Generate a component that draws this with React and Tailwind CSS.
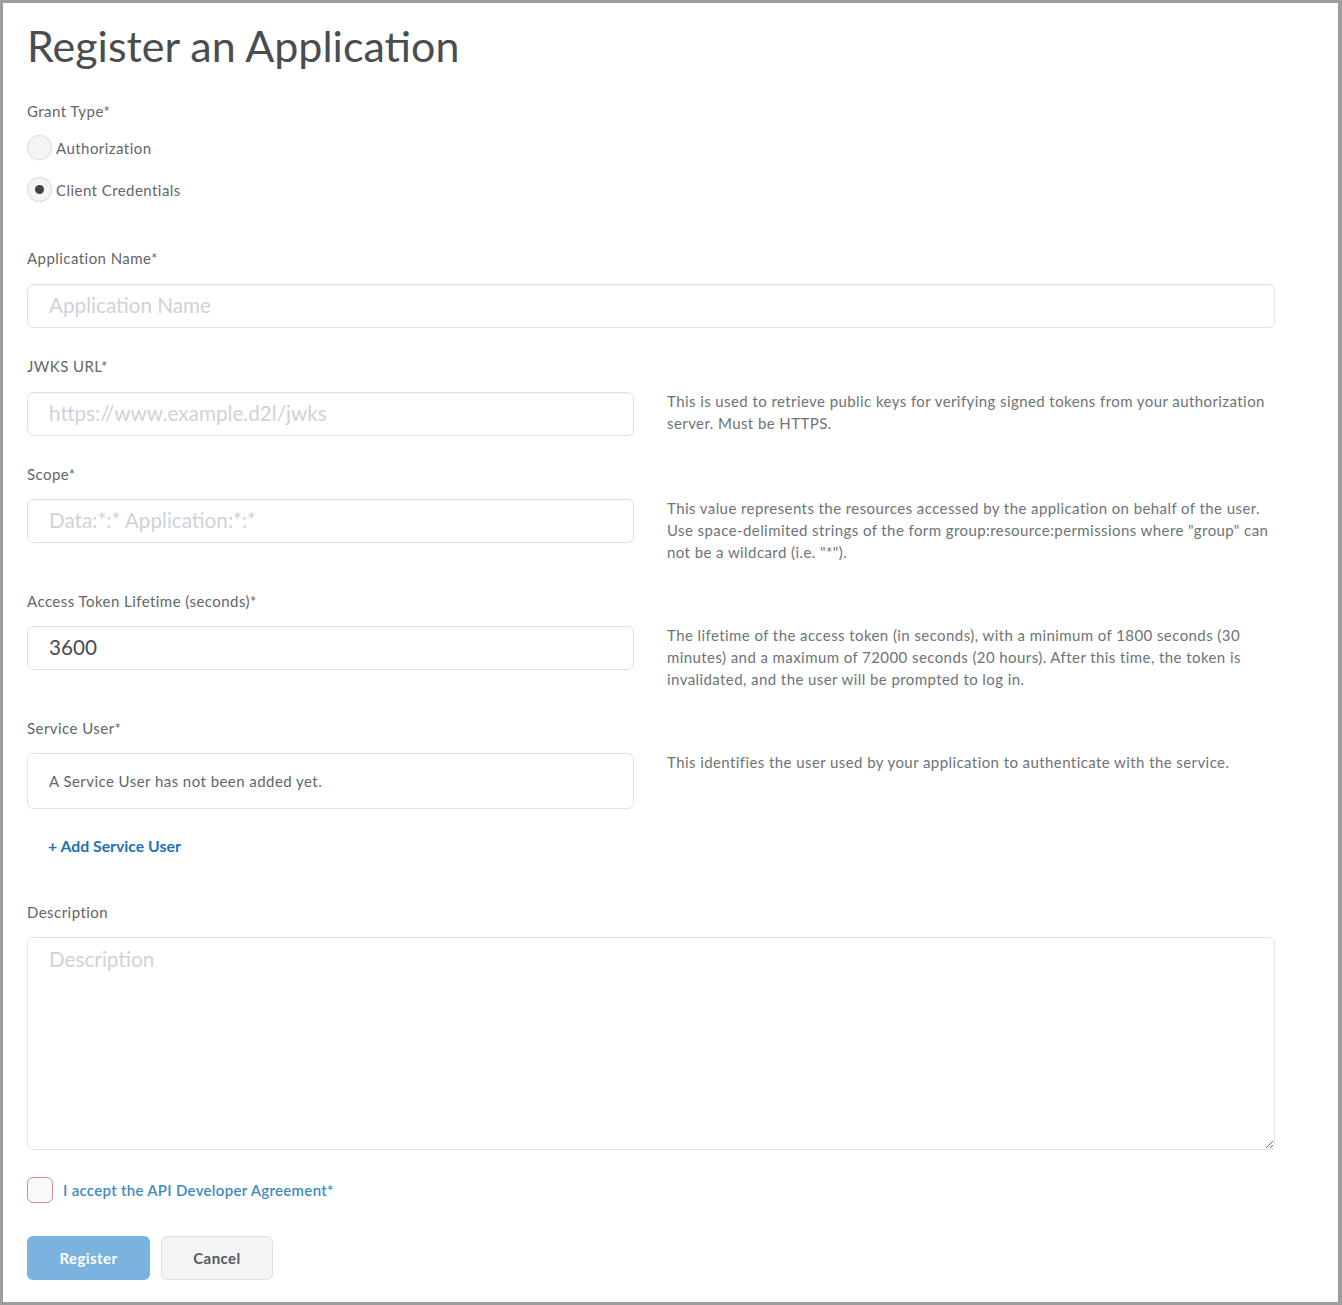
import React from "react";

const font = { fontFamily: "Lato, 'Noto Sans', sans-serif" };

function Label({ children, className = "" }) {
  return (
    <div className={"text-[15px] leading-[20px] tracking-[0.03em] text-[#626669] " + className}>
      {children}
    </div>
  );
}

function Help({ children }) {
  return (
    <div className="-mt-[2px] text-[15px] leading-[22px] tracking-[0.028em] text-[#6e7376]">
      {children}
    </div>
  );
}

function TextInput({ placeholder, value }) {
  return (
    <input
      type="text"
      placeholder={placeholder}
      defaultValue={value}
      className="block h-[44px] w-full rounded-[6px] border border-[#dfe3e9] bg-white pb-[3px] pl-[21px] text-[20.7px] text-[#494c4e] outline-none placeholder:text-[#cdd3da] shadow-[inset_0_1px_2px_rgba(0,0,0,0.03)]"
      style={font}
    />
  );
}

function Radio({ checked, label }) {
  return (
    <div className="flex items-center">
      <div className="flex h-[25px] w-[25px] items-center justify-center rounded-full border border-[#d9dde2] bg-[#f3f4f6] shadow-[0_0_2px_rgba(0,0,0,0.08)]">
        {checked && <div className="h-[9px] w-[9px] rounded-full bg-[#3f4244]" />}
      </div>
      <span className="ml-[4px] text-[15px] leading-[20px] tracking-[0.03em] text-[#626669]">{label}</span>
    </div>
  );
}

export default function App() {
  return (
    <div
      className="h-[1305px] w-[1342px] border-t-[3px] border-l-[3px] border-r-[4px] border-b-[3px] border-[#9e9e9e] bg-white pl-[24px] pt-[18px]"
      style={font}
    >
      <div className="w-[1248px]">
        <h1 className="text-[43px] leading-[50px] font-normal text-[#4a4d50]">
          Register an Application
        </h1>

        <Label className="mt-[30px]">Grant Type*</Label>
        <div className="mt-[14px]">
          <Radio label="Authorization" />
        </div>
        <div className="mt-[17px]">
          <Radio checked label="Client Credentials" />
        </div>

        <Label className="mt-[46px]">Application Name*</Label>
        <div className="mt-[16px]">
          <TextInput placeholder="Application Name" />
        </div>

        <Label className="mt-[28px]">JWKS URL*</Label>
        <div className="mt-[16px] grid grid-cols-[607px_608px] gap-x-[33px]">
          <TextInput placeholder="https://www.example.d2l/jwks" />
          <Help>
            This is used to retrieve public keys for verifying signed tokens from your authorization server. Must be HTTPS.
          </Help>
        </div>

        <Label className="mt-[28px]">Scope*</Label>
        <div className="mt-[15px] grid grid-cols-[607px_608px] gap-x-[33px]">
          <TextInput placeholder="Data:*:* Application:*:*" />
          <Help>
            This value represents the resources accessed by the application on behalf of the user. Use space-delimited strings of the form group:resource:permissions where "group" can not be a wildcard (i.e. "*").
          </Help>
        </div>

        <Label className="mt-[28px]">Access Token Lifetime (seconds)*</Label>
        <div className="mt-[15px] grid grid-cols-[607px_608px] gap-x-[33px]">
          <TextInput value="3600" />
          <Help>
            The lifetime of the access token (in seconds), with a minimum of 1800 seconds (30 minutes) and a maximum of 72000 seconds (20 hours). After this time, the token is invalidated, and the user will be prompted to log in.
          </Help>
        </div>

        <Label className="mt-[28px]">Service User*</Label>
        <div className="mt-[15px] grid grid-cols-[607px_608px] gap-x-[33px]">
          <div className="flex h-[56px] items-center rounded-[6px] border border-[#dfe3e9] bg-white pl-[21px] text-[15px] tracking-[0.03em] text-[#626669]">
            A Service User has not been added yet.
          </div>
          <Help>This identifies the user used by your application to authenticate with the service.</Help>
        </div>

        <div className="mt-[27px] pl-[21px] text-[15.8px] leading-[20px] font-bold text-[#1d72b8]">
          + Add Service User
        </div>

        <Label className="mt-[46px]">Description</Label>
        <textarea
          placeholder="Description"
          className="mt-[15px] block h-[213px] w-full rounded-[6px] border border-[#dfe3e9] bg-white pl-[21px] pt-[6px] text-[20.7px] text-[#494c4e] outline-none placeholder:text-[#cdd3da]"
          style={font}
        />

        <div className="mt-[27px] flex items-center">
          <div className="h-[26px] w-[26px] rounded-[6px] border-[1.5px] border-[#d48a90] bg-[#f8f9fa]" />
          <span className="ml-[10px] text-[15px] leading-[20px] tracking-[0.02em] font-semibold text-[#3d8bc6]">
            I accept the API Developer Agreement*
          </span>
        </div>

        <div className="mt-[33px] flex gap-[11px]">
          <button className="h-[44px] w-[123px] rounded-[6px] bg-[#79b3de] text-[15px] tracking-[0.03em] font-bold text-white" style={font}>
            Register
          </button>
          <button className="h-[44px] w-[112px] rounded-[6px] border border-[#dde1e6] bg-[#f3f4f6] text-[15px] tracking-[0.03em] font-bold text-[#565a5c]" style={font}>
            Cancel
          </button>
        </div>
      </div>
    </div>
  );
}
